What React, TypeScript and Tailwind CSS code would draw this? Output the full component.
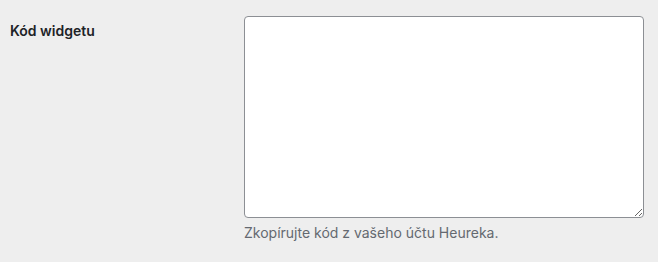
export default function App() {
  return (
    <div className="min-h-[262px] w-full bg-[#eeeeee] text-[14px] text-[#1d2327]" style={{ fontFamily: 'Inter, "Liberation Sans", sans-serif' }}>
      <div className="flex pt-4">
        <div className="w-[244px] shrink-0 pl-[10px] pt-[5px] font-semibold leading-[20px]">Kód widgetu</div>
        <div className="flex flex-col">
          <textarea className="block h-[202px] w-[400px] rounded-[4px] border border-[#8c8f94] bg-white px-2 py-[2px] outline-none" />
          <p className="mt-[5px] leading-[20px] text-[#646970]">Zkopírujte kód z vašeho účtu Heureka.</p>
        </div>
      </div>
    </div>
  );
}
